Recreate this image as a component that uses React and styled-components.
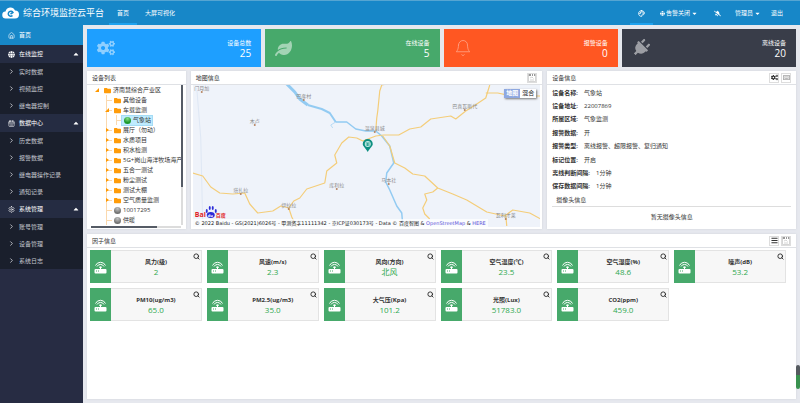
import React from 'react';
import styled, { createGlobalStyle, css } from 'styled-components';
import {
    FaCogs, FaLeaf, FaPlug, FaGlobe, FaCaretDown, FaCaretUp, FaFolder,
    FaBellSlash, FaBars, FaRegKeyboard
} from 'react-icons/fa';
import { LuHouse, LuChevronRight, LuSearch, LuSettings, LuCalendarDays, LuPalette, LuBell } from 'react-icons/lu';

const GlobalStyle = createGlobalStyle`
    * { box-sizing: border-box; }

    body {
        margin: 0;
        background: #e6e8ee;
        color: #333;
        font-family: "Open Sans", "Noto Sans CJK SC", sans-serif;
        font-size: 6px;
        line-height: 10px;
    }

    button, a { font: inherit; color: inherit; text-decoration: none; }
    button { margin: 0; padding: 0; border: 0; background: none; }
    ul, dl, dd, h1, h2, h3, p { margin: 0; padding: 0; list-style: none; font-size: inherit; font-weight: normal; }
    svg { display: block; flex: none; }
`;

const Page = styled.div`
    display: flex;
    flex-direction: column;
    min-height: 100vh;
`;

const Header = styled.header`
    display: flex;
    align-items: stretch;
    height: 25px;
    padding: 0 12px 0 2px;
    border-top: 1px solid #55a5d2;
    background: #1787c8;
    color: #fff;
`;

const Brand = styled.h1`
    display: flex;
    align-items: center;
    gap: 4px;
    font-size: 9px;
    white-space: nowrap;
`;

const navItem = css`
    display: flex;
    align-items: center;
    justify-content: center;
    gap: 1px;
    padding: 0 ${props => props.$pad || 8}px;
    white-space: nowrap;
    border-bottom: 2px solid ${props => props.$active ? '#1ea2ee' : 'transparent'};
    border-top: 2px solid transparent;
`;

const NavLink = styled.a`${navItem}`;

const UserButton = styled.button`${navItem}`;

const MainNav = styled.nav`
    display: flex;
    margin-left: 5px;
`;

const UserNav = styled.div`
    display: flex;
    margin-left: auto;
`;

const Body = styled.div`
    display: flex;
    flex: 1;
`;

const Sidebar = styled.nav`
    flex: none;
    width: 83px;
    background: #272c43;
    color: #c3c6cd;
`;

const SideHome = styled.a`
    display: flex;
    align-items: center;
    gap: 4px;
    height: 20px;
    padding-left: 8px;
    background: #1787c8;
    color: #fff;
`;

const SideGroup = styled.button`
    display: flex;
    align-items: center;
    gap: 4px;
    width: 100%;
    height: 18px;
    padding: 0 3px 0 8px;
    background: #252c42;
    color: #fff;

    svg:last-child { margin-left: auto; }
`;

const SideLink = styled.a`
    display: flex;
    align-items: center;
    gap: 4px;
    height: 17px;
    padding-left: 8px;
    background: #1a1f2c;
`;

const Main = styled.main`
    display: flex;
    flex: 1;
    flex-direction: column;
    gap: 4px;
    min-width: 0;
    padding: 4px;
`;

const Stats = styled.section`
    display: grid;
    grid-template-columns: repeat(4, 1fr);
    gap: 4px;
`;

const StatCard = styled.article`
    display: flex;
    align-items: center;
    justify-content: space-between;
    height: 38px;
    padding: 0 10px;
    background: ${props => props.$color};
    color: #fff;

    > svg {
        opacity: 0.5;
        transform: rotate(${props => props.$turn || 0}deg);
    }
`;

const StatText = styled.div`
    text-align: right;

    strong {
        display: block;
        font-size: 10px;
        font-weight: normal;
    }
`;

const Columns = styled.div`
    display: grid;
    grid-template-columns: 99fr 352fr 249fr;
    gap: 5px;
    margin-bottom: 1px;
`;

const PanelBox = styled.section`
    display: flex;
    flex: ${props => props.$grow ? 1 : 'none'};
    flex-direction: column;
    min-width: 0;
    background: #fff;
    box-shadow: 0 0 2px #d0d3da;
`;

const PanelHead = styled.header`
    display: flex;
    align-items: center;
    justify-content: space-between;
    height: 14px;
    padding: 0 5px;
    border-bottom: 1px solid #dfe1e5;
`;

const Tools = styled.div`
    display: flex;
    gap: 2px;
`;

const ToolButton = styled.button`
    display: flex;
    align-items: center;
    justify-content: center;
    width: 10px;
    height: 10px;
    border: 1px solid #ddd;
    background: #fff;
`;

const TreeScroll = styled.div`
    display: flex;
    padding: 0 3px 0 7px;
`;

const Tree = styled.ul`
    flex: 1;
    min-width: 0;
    overflow: hidden;
`;

const TreeRow = styled.li`
    display: flex;
    align-items: center;
    height: 10px;
    white-space: nowrap;
`;

const lineV = 'linear-gradient(#fbd9ae, #fbd9ae) 2px 0 / 1px 100% no-repeat';
const lineH = 'linear-gradient(#fbd9ae, #fbd9ae) 2px 5px / 6px 1px no-repeat';

const Indent = styled.span`
    flex: none;
    width: 10px;
    height: 10px;
    background: ${props => props.$line ? `${lineV}${props.$branch ? `, ${lineH}` : ''}` : 'none'};
`;

const Closed = styled.i`
    display: block;
    width: 3px;
    height: 4px;
    margin: 3px 0 0 2px;
    background: #f90;
    clip-path: polygon(0 0, 100% 50%, 0 100%);
`;

const Opened = styled(Closed)`
    width: 4px;
    margin-left: 1px;
    clip-path: polygon(100% 0, 100% 100%, 0 100%);
`;

const TreeLabel = styled.span`
    display: flex;
    align-items: center;
    gap: 2px;
    height: 9px;
    ${props => props.$selected && css`
        margin-left: -2px;
        padding: 0 1px 0 2px;
        background: #beebff;
        box-shadow: 0 0 0 1px #a5dcf5;
    `}
`;

const Dot = styled.i`
    width: 7px;
    height: 7px;
    border-radius: 50%;
    background: ${props => props.$online
        ? 'radial-gradient(circle at 50% 25%, #8be08b, #1d9a2c 60%)'
        : 'radial-gradient(circle at 50% 25%, #c4c4c4, #6f6f6f 70%)'};
`;

const ScrollTrack = styled.div`
    flex: none;
    width: 2px;
    background: linear-gradient(#555b65 73%, #dcdcdc 73%);
`;

const ScrollTrackX = styled.div`
    height: 2px;
    margin: 1px 5px 1px 4px;
    background: linear-gradient(90deg, #555b65 73%, #dcdcdc 73%);
`;

const MapBox = styled.div`
    position: relative;
    flex: 1;
    min-height: 0;
    margin: 0 2px 2px;
    overflow: hidden;
    background: #eff3fa;

    > svg {
        position: absolute;
        width: 100%;
        height: 100%;
    }
`;

const MapType = styled.div`
    position: absolute;
    top: 4px;
    right: 4px;
    display: flex;
    box-shadow: 1px 1px 2px #777;
`;

const MapTypeButton = styled.button`
    width: 16px;
    height: 9px;
    line-height: 9px;
    background: ${props => props.$active ? '#8ea8e0' : '#fff'};
    color: ${props => props.$active ? '#fff' : '#222'};
    font-weight: ${props => props.$active ? 'bold' : 'normal'};
`;

const MapCredit = styled.p`
    position: absolute;
    bottom: 0;
    left: 0;
    padding: 0 2px;
    background: rgba(255, 255, 255, 0.7);
    color: #222;
    font-family: "DejaVu Sans", "Noto Sans CJK SC", sans-serif;
    font-size: 5px;
    line-height: 8px;
    white-space: nowrap;

    a { color: #5c50d8; }
`;

const InfoList = styled.dl`
    display: flex;
    flex: 1;
    flex-direction: column;
    justify-content: space-around;
    padding: 1px 5px 0;
`;

const InfoRow = styled.div`
    display: flex;
    gap: 6px;

    dt { font-weight: 600; }
`;

const CameraTitle = styled.h3`
    margin: 2px 5px 0;
    padding: 0 4px 1px;
    border-bottom: 1px solid #ddd;
`;

const Empty = styled.p`
    padding: 5px 0 7px;
    text-align: center;
`;

const Factors = styled.div`
    display: grid;
    grid-template-columns: repeat(6, 1fr);
    gap: 5px;
    padding: 2px 10px 2px 3px;
`;

const FactorCard = styled.article`
    display: flex;
    height: 33px;
    border: 1px solid #e3e3e3;
    border-left: 0;
    background: #f7f7f7;
`;

const FactorIcon = styled.div`
    display: flex;
    align-items: center;
    justify-content: center;
    width: 21px;
    margin: -1px 0;
    background: #47a96b;
`;

const FactorText = styled.div`
    flex: 1;
    padding-top: 6px;
    text-align: center;

    h3 { font-weight: bold; }

    p {
        color: #2fa84f;
        font-size: 8px;
    }
`;

const SearchButton = styled.button`
    display: flex;
    align-self: flex-start;
    width: 7px;
    margin: 2px 1px 0 -8px;
    color: #222;
`;

const SideGauge = styled.div`
    position: absolute;
    top: 365px;
    right: 0;
    width: 4px;
    height: 24px;
    background: linear-gradient(#555a5f 40%, #39924f 40%);
    border-radius: 2px;
`;

const menu = [
    { title: '在线监控', icon: FaGlobe, items: ['实时数据', '视频监控', '继电器控制'] },
    { title: '数据中心', icon: LuCalendarDays, items: ['历史数据', '报警数据', '继电器操作记录', '通知记录'] },
    { title: '系统管理', icon: LuSettings, items: ['账号管理', '设备管理', '系统日志'] }
];

const stats = [
    { label: '设备总数', value: 25, color: '#1e9fff', icon: <FaCogs size={18} /> },
    { label: '在线设备', value: 5, color: '#47a96b', icon: <FaLeaf size={17} /> },
    { label: '报警设备', value: 0, color: '#ff5722', icon: <LuBell size={18} strokeWidth={1} /> },
    { label: '离线设备', value: 20, color: '#393d49', icon: <FaPlug size={18} />, turn: 45 }
];

const tree = [
    { name: '济南慧综合产业区', level: 0, state: 'open' },
    { name: '其他设备', level: 1 },
    { name: '车载监测', level: 1, state: 'open' },
    { name: '气象站', level: 2, device: true, online: true },
    { name: '展厅（勿动）', level: 1, state: 'closed' },
    { name: '水质项目', level: 1, state: 'closed' },
    { name: '积水检测', level: 1, state: 'closed' },
    { name: '5G+岗山海洋牧场海产', level: 1, state: 'closed' },
    { name: '五合一测试', level: 1, state: 'closed' },
    { name: '粉尘测试', level: 1, state: 'closed' },
    { name: '测试大棚', level: 1, state: 'closed' },
    { name: '空气质量监测', level: 1, state: 'closed' },
    { name: '10017295', level: 1, device: true },
    { name: '供暖', level: 1, device: true }
];

const info = [
    ['设备名称', '气象站'],
    ['设备地址', '22007869'],
    ['所属区域', '气象监测'],
    ['报警数据', '开'],
    ['报警类型', '离线报警、超限报警、复归通知'],
    ['标记位置', '开启'],
    ['离线判断间隔', '1分钟'],
    ['保存数据间隔', '1分钟']
];

const factors = [
    ['风力(级)', '2'],
    ['风速(m/s)', '2.3'],
    ['风向(方向)', '北风'],
    ['空气温度(℃)', '23.5'],
    ['空气湿度(%)', '48.6'],
    ['噪声(dB)', '53.2'],
    ['PM10(ug/m3)', '65.0'],
    ['PM2.5(ug/m3)', '35.0'],
    ['大气压(Kpa)', '101.2'],
    ['光照(Lux)', '51783.0'],
    ['CO2(ppm)', '459.0']
];

const towns = [
    [202, 92, '门月加'], [304, 100, '巴彦村'], [255, 125, '木卢'], [375, 132, '温泉县城'],
    [465, 110, '巴喜瓦斯代'], [337, 189, '库利拉'], [241, 194, '塔扎拉'],
    [289, 209, '伊拉拉'], [389, 184, '马本社'], [506, 219, '瓦利才莱']
];

const CloudLogo = () => (
    <svg width="17" height="14" viewBox="0 0 34 26">
        <path fill="#fff" d="M8 24a7 7 0 0 1-1-14A10 10 0 0 1 26 8a8 8 0 0 1 0 16z" />
        <path fill="none" stroke="#1787c8" strokeWidth="3" d="M21 18a5 5 0 1 1 1-6l-5 3" />
    </svg>
);

const RouterIcon = () => (
    <svg width="13" height="14" viewBox="0 0 26 28" fill="none" stroke="#fff" strokeWidth="2">
        <path d="M3 11a11 11 0 0 1 20 0M6 13a8 8 0 0 1 14 0M10 15a4 4 0 0 1 6 0M13 14v5" />
        <rect x="1" y="18" width="24" height="9" rx="2" fill="#fff" stroke="none" />
        <path stroke="#47a96b" d="M4 22h2M8 22h2" />
    </svg>
);

const PanelIcon = () => (
    <svg width="8" height="8" viewBox="0 0 16 16" fill="none" stroke="#aaa" strokeWidth="1">
        <path d="M1 4v11h14V4M4 8l4-2 3 3M4 12h8" />
        <path stroke="#333" strokeWidth="2" d="M1 2h5M8 2h2M12 2h3" />
    </svg>
);

const MapDrawing = () => (
    <svg viewBox="193 85 348 142" preserveAspectRatio="xMidYMid slice" fill="none" strokeLinejoin="round">
        <path stroke="#dfe8f5" strokeWidth="1" d="M197 88l4 50 2 88" />
        <g stroke="#93cbf2">
            <path strokeWidth="3" d="M287 84l8 8 5 7 8 6" />
            <path strokeWidth="2" d="M308 105l14 4 8 4 6 9" />
            <path strokeWidth="1.5" d="M336 122l11 0 9 7 10 2 10 0 6 5 8 10 4 17-7 10-1 9 4 8 7 16 5 7 1 12" />
            <path strokeWidth=".6" d="M336 122l-5 3 2 3" />
        </g>
        <g stroke="#f4cd79" strokeWidth="1.2">
            <path d="M193 173l10 3 8 11 9 6 13 1 12-1 5 11 8 9 15-2 8-5 8 2 5-7 6-3 7-9 18-6 2-12 10-8-2-8 7-12 7-6 8 1 6 3 13-5 8-1 15 0 11-6 11-2 10-8 20-3 5 3 10-8 8-5 12-8 4-13" />
            <path d="M289 208l3 9 5 10M376 131l1-13 1-7 2-20 2-6 5-1M486 93h12l14 3 29 0" />
            <path d="M383 136l7 10 5 17 10 5 8 6 12 2 13 12 15 6 14 6 20 12 18 4 8-6 17 3 11 6M438 188l-5 4-8 2 2 6-4 8 2 6 5 5M506 214l1 12" />
        </g>
        {towns.map(([x, y, name]) => (
            <g key={name}>
                <circle cx={x} cy={y} r="1" fill="#b5835f" />
                <text x={x} y={y - 2} fontSize="5" fill="#8a8a8a" textAnchor="middle">{name}</text>
            </g>
        ))}
        <path fill="#0d8f80" d="M368 152c-3-5-5-6-5-8a5 5 0 0 1 10 0c0 2-2 3-5 8z" />
        <circle cx="368" cy="144" r="3" fill="#c9eee7" />
        <path stroke="#0d8f80" strokeWidth=".8" d="M366 143h4M366 145h4M368 143v3" />
        <text x="195" y="217" fontSize="7" fontWeight="bold" fill="#e11f26">Bai</text>
        <g fill="#2b2bd8">
            <ellipse cx="211" cy="215" rx="4" ry="3" />
            <ellipse cx="207" cy="211" rx="1" ry="2" />
            <ellipse cx="210" cy="208" rx="1" ry="2" />
            <ellipse cx="213" cy="208" rx="1" ry="2" />
            <ellipse cx="216" cy="211" rx="1" ry="2" />
        </g>
        <text x="208" y="217" fontSize="4" fontWeight="bold" fill="#fff">du</text>
        <text x="216" y="217" fontSize="5" fontWeight="bold" fill="#e11f26">百度</text>
    </svg>
);

function Panel({ title, tools = [], grow, children }) {
    return (
        <PanelBox $grow={grow}>
            <PanelHead>
                <h2>{title}</h2>
                <Tools>
                    {tools.map(([label, icon]) => (
                        <ToolButton key={label} aria-label={label}>{icon}</ToolButton>
                    ))}
                </Tools>
            </PanelHead>
            {children}
        </PanelBox>
    );
}

function TreeNode({ node }) {
    return (
        <TreeRow>
            {node.level === 2 && <><Indent /><Indent $line /></>}
            {node.level === 1 && <Indent />}
            <Indent $line={node.level > 0} $branch>
                {node.state === 'open' && <Opened />}
                {node.state === 'closed' && <Closed />}
            </Indent>
            <TreeLabel $selected={node.online}>
                {node.device ? <Dot $online={node.online} /> : <FaFolder size={7} color="#ff9c0a" />}
                {node.name}
            </TreeLabel>
        </TreeRow>
    );
}

export default function App() {
    return (
        <Page>
            <GlobalStyle />
            <Header>
                <Brand><CloudLogo />综合环境监控云平台</Brand>
                <MainNav>
                    <NavLink href="#home" $active>首页</NavLink>
                    <NavLink href="#screen">大屏可视化</NavLink>
                </MainNav>
                <UserNav>
                    <UserButton $active aria-label="主题"><LuPalette size={7} strokeWidth={3} /></UserButton>
                    <UserButton $pad={7}><FaGlobe size={5} />告警关闭<FaCaretDown size={7} /></UserButton>
                    <UserButton $pad={9} aria-label="静音"><FaBellSlash size={7} /></UserButton>
                    <UserButton $pad={5}>管理员<FaCaretDown size={7} /></UserButton>
                    <NavLink href="#logout" $pad={5}>退出</NavLink>
                </UserNav>
            </Header>
            <Body>
                <Sidebar>
                    <SideHome href="#home"><LuHouse size={7} />首页</SideHome>
                    {menu.map(({ title, icon: Icon, items }) => (
                        <div key={title}>
                            <SideGroup><Icon size={7} />{title}<FaCaretUp size={8} /></SideGroup>
                            {items.map(item => (
                                <SideLink href="#page" key={item}><LuChevronRight size={7} strokeWidth={3} />{item}</SideLink>
                            ))}
                        </div>
                    ))}
                </Sidebar>
                <Main>
                    <Stats>
                        {stats.map(({ label, value, color, icon, turn }) => (
                            <StatCard key={label} $color={color} $turn={turn}>
                                {icon}
                                <StatText>{label}<strong>{value}</strong></StatText>
                            </StatCard>
                        ))}
                    </Stats>
                    <Columns>
                        <Panel title="设备列表">
                            <TreeScroll>
                                <Tree>{tree.map(node => <TreeNode key={node.name} node={node} />)}</Tree>
                                <ScrollTrack />
                            </TreeScroll>
                            <ScrollTrackX />
                        </Panel>
                        <Panel title="地图信息" tools={[['面板', <PanelIcon />]]}>
                            <MapBox>
                                <MapDrawing />
                                <MapType>
                                    <MapTypeButton $active>地图</MapTypeButton>
                                    <MapTypeButton>混合</MapTypeButton>
                                </MapType>
                                <MapCredit>
                                    © 2022 Baidu - GS(2021)6026号 - 甲测资字11111342 - 京ICP证030173号 - Data © 百度智图 &amp; <a href="#osm">OpenStreetMap</a> &amp; <a href="#here">HERE</a>
                                </MapCredit>
                            </MapBox>
                        </Panel>
                        <Panel title="设备信息" tools={[['设置', <FaCogs size={7} />], ['详情', <FaRegKeyboard size={7} color="#777" />]]}>
                            <InfoList>
                                {info.map(([name, value]) => (
                                    <InfoRow key={name}><dt>{name}:</dt><dd>{value}</dd></InfoRow>
                                ))}
                            </InfoList>
                            <CameraTitle>摄像头信息</CameraTitle>
                            <Empty>暂无摄像头信息</Empty>
                        </Panel>
                    </Columns>
                    <Panel title="因子信息" grow tools={[['列表', <FaBars size={7} />], ['面板', <PanelIcon />]]}>
                        <Factors>
                            {factors.map(([name, value]) => (
                                <FactorCard key={name}>
                                    <FactorIcon><RouterIcon /></FactorIcon>
                                    <FactorText><h3>{name}</h3><p>{value}</p></FactorText>
                                    <SearchButton aria-label={name}><LuSearch size={7} strokeWidth={3} /></SearchButton>
                                </FactorCard>
                            ))}
                        </Factors>
                    </Panel>
                </Main>
            </Body>
            <SideGauge />
        </Page>
    );
}
